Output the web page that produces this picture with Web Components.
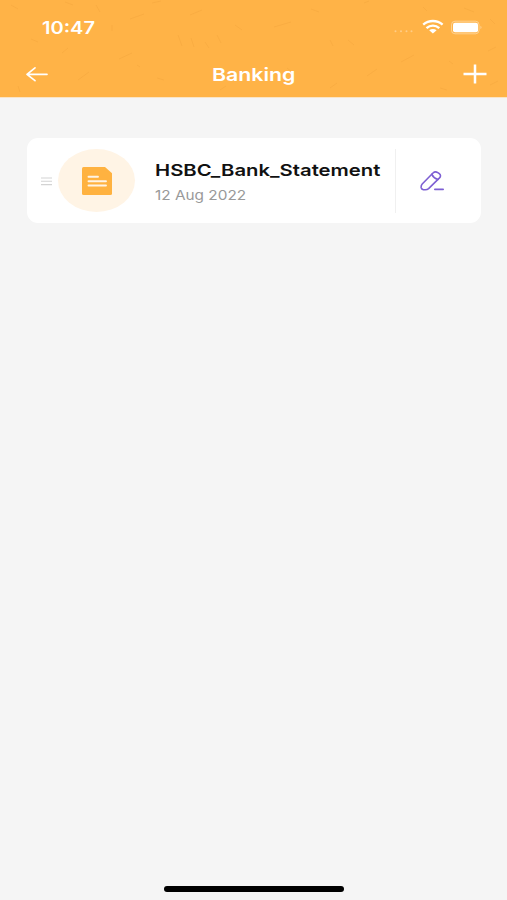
<!DOCTYPE html>
<html lang="en">
<head>
<meta charset="utf-8">
<title>Banking</title>
<style>
html, body{
    margin: 0;
    height: 100%;
    overflow: hidden;
    background: #f5f5f5;
}
</style>
</head>
<body>
<banking-screen></banking-screen>

<template id="fit-text">
<style>
:host{
    display: block;
    overflow: visible;
    white-space: nowrap;
    flex: none;
}
span{
    display: inline-block;
    transform-origin: left center;
}
</style>
<span><slot></slot></span>
</template>

<template id="status-bar">
<style>
:host{
    display: flex;
    align-items: center;
    justify-content: space-between;
    height: 22px;
    padding: 17px 25px 0 42px;
}
fit-text{
    font: 600 17px/22px Inter, sans-serif;
}
svg{
    display: block;
}
</style>
<fit-text width="53">10:47</fit-text>
<svg width="90" height="22" viewBox="0 0 90 22" fill="none">
    <g fill="#fff" opacity=".35">
        <circle cx="3.5" cy="14.3" r="1"/><circle cx="9" cy="14.3" r="1"/><circle cx="14.5" cy="14.3" r="1"/><circle cx="19.5" cy="14.3" r="1"/>
    </g>
    <g stroke="#fff" stroke-width="2.4">
        <path d="M31.2 7.6C36.8 2.8 45 2.8 50.6 7.6"/>
        <path d="M34.5 11.2C38.3 7.8 43.5 7.8 47.3 11.2"/>
    </g>
    <path d="M37.2 13.2C39.3 11.5 42.5 11.5 44.6 13.2L40.9 16.4Z" fill="#fff"/>
    <rect x="59.5" y="4.2" width="27.5" height="12.6" rx="3.5" stroke="#fff" stroke-opacity=".4"/>
    <rect x="61" y="5.8" width="25" height="9.4" rx="2" fill="#fff"/>
    <path d="M88.6 8.8Q90.1 10.5 88.6 12.2Z" fill="#fff" fill-opacity=".6"/>
</svg>
</template>

<template id="nav-bar">
<style>
:host{
    display: flex;
    align-items: center;
    justify-content: space-between;
    height: 36px;
    margin-top: 17px;
    padding: 0 20px 0 25px;
}
fit-text{
    font: 600 17.5px/24px Inter, sans-serif;
    margin: 2px 5px 0 0;
}
svg{
    display: block;
}
</style>
<svg width="24" height="18" viewBox="0 0 24 18" fill="none" stroke="#fff" stroke-width="1.7" stroke-linecap="round" stroke-linejoin="round">
    <path d="M2 9.3H22M10 2.9L2 9.3L10 15.7"/>
</svg>
<fit-text width="84"><slot></slot></fit-text>
<svg width="24" height="20" viewBox="0 0 24 20" fill="none" stroke="#fff" stroke-width="2.5">
    <path d="M0.5 10H23.5M12 .5V19.5"/>
</svg>
</template>

<template id="app-header">
<style>
:host{
    display: grid;
    height: 97px;
    color: #fff;
    background: #ffb347;
    border-bottom: 1px solid #fae4c6;
}
.pattern, .bars{
    grid-area: 1 / 1;
}
.pattern{
    display: block;
}
</style>
<!-- faint hand-drawn doodles behind the bars -->
<svg class="pattern" width="507" height="97" viewBox="0 0 507 97" fill="none" stroke="#e89c35" stroke-opacity=".28" stroke-width="1">
    <path d="M11 5l7 4M65 2l8 3M130 19l14-5M112 25v6M119 59l13-6M78 80l11-8M157 78l7 2M18 86l2 6M137 65l3 2M178 35l4 11M191 38l3 9M205 42l4 6M217 35l4 8M190 15l12-5M235 25l7 5M274 27l17-5M330 40l3 6M348 40l6 5M367 76l10-7M401 62l13-7M311 9l8 3M364 3l5-2M423 7l4 4M464 8l10 4M490 19l5 5M488 51l8-4M449 61l4 3M330 88l7-5M287 68l5 4M31 39l7 3M62 53l6-5M490 85l8-4M440 88l7 2M220 90l6-4M96 5l4 7M152 3l9-2"/>
</svg>
<div class="bars">
    <status-bar></status-bar>
    <nav-bar><slot></slot></nav-bar>
</div>
</template>

<template id="document-card">
<style>
:host{
    display: flex;
    align-items: center;
    box-sizing: border-box;
    height: 85px;
    padding-left: 14px;
    border-radius: 11px;
    background: #fff;
}
svg{
    display: block;
}
.badge{
    display: flex;
    align-items: center;
    justify-content: center;
    width: 77px;
    height: 63px;
    margin-left: 6px;
    border-radius: 50%;
    background: #fff4e5;
}
.text{
    width: 240px;
    margin-left: 20px;
}
.name{
    font: 600 16.5px/24px Inter, sans-serif;
    color: #111;
    margin-top: 1px;
}
.date{
    font: 400 13px/18px Inter, sans-serif;
    color: #999;
    margin-top: 4px;
}
.edit{
    display: flex;
    align-items: center;
    height: 64px;
    padding-left: 24px;
    border-left: 1px solid #f0f0f0;
}
</style>
<svg width="11" height="10" viewBox="0 0 11 10" stroke="#d3d3d3" stroke-width="1.1">
    <path d="M0 2H11M0 5.3H11M0 8.6H11"/>
</svg>
<div class="badge">
    <svg width="30" height="28" viewBox="0 0 30 28">
        <path d="M1.5 0H23L30 6.2V26.5Q30 28 28.5 28H1.5Q0 28 0 26.5V1.5Q0 0 1.5 0Z" fill="#ffb240"/>
        <path d="M6.5 9.7H16M6.5 14.2H24M6.5 18.5H24" stroke="#fff4e5" stroke-width="1.9" stroke-linecap="round"/>
    </svg>
</div>
<div class="text">
    <fit-text class="name" width="225"><slot name="name"></slot></fit-text>
    <fit-text class="date" width="91"><slot name="date"></slot></fit-text>
</div>
<div class="edit">
    <svg width="26" height="22" viewBox="0 0 26 22" fill="none" stroke="#7d5fd3" stroke-width="1.6" stroke-linecap="round" stroke-linejoin="round">
        <path d="M2.2 14L13 3Q15.2 1 17.8 2.6L19.3 3.7Q21.6 5.6 19.5 7.9L8.6 18.6Q7.3 19.8 5.3 19.8L3.2 19.6Q1.3 19.3 1.1 17.4Q1 15.3 2.2 14Z"/>
        <path d="M11.8 4.3Q13.6 8.2 18 9.4M14.8 19.4H23.2"/>
    </svg>
</div>
</template>

<template id="banking-screen">
<style>
:host{
    display: flex;
    flex-direction: column;
    width: 507px;
    height: 900px;
    background: #f5f5f5;
}
main{
    flex: 1;
    padding: 40px 26px 0 27px;
}
.home{
    align-self: center;
    width: 180px;
    height: 5.5px;
    margin-bottom: 8.5px;
    border-radius: 3px;
    background: #000;
}
</style>
<app-header>Banking</app-header>
<main>
    <document-card>
        <span slot="name">HSBC_Bank_Statement</span>
        <span slot="date">12 Aug 2022</span>
    </document-card>
</main>
<div class="home"></div>
</template>

<script>
class TemplateElement extends HTMLElement{
    constructor(){
        super();
        const template = document.getElementById(this.localName);
        this.attachShadow({mode: "open"});
        this.shadowRoot.appendChild(template.content.cloneNode(true));
    }
}

// Stretches its text horizontally to the width attribute
class FitText extends TemplateElement{
    connectedCallback(){
        const width = Number(this.getAttribute("width"));
        this.style.width = width + "px";
        requestAnimationFrame(() => {
            const span = this.shadowRoot.querySelector("span");
            span.style.transform = `scaleX(${width / span.offsetWidth})`;
        });
    }
}

customElements.define("fit-text", FitText);
customElements.define("status-bar", class extends TemplateElement{});
customElements.define("nav-bar", class extends TemplateElement{});
customElements.define("app-header", class extends TemplateElement{});
customElements.define("document-card", class extends TemplateElement{});
customElements.define("banking-screen", class extends TemplateElement{});
</script>
</body>
</html>
